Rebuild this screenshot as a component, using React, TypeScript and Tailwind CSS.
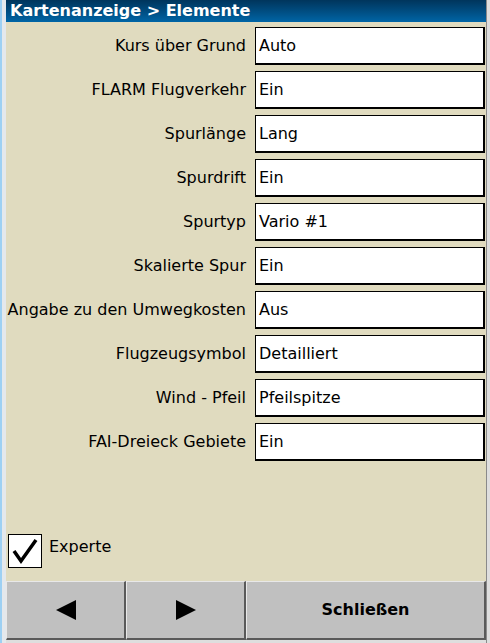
import React from "react";

const rows: [string, string][] = [
  ["Kurs über Grund", "Auto"],
  ["FLARM Flugverkehr", "Ein"],
  ["Spurlänge", "Lang"],
  ["Spurdrift", "Ein"],
  ["Spurtyp", "Vario #1"],
  ["Skalierte Spur", "Ein"],
  ["Angabe zu den Umwegkosten", "Aus"],
  ["Flugzeugsymbol", "Detailliert"],
  ["Wind - Pfeil", "Pfeilspitze"],
  ["FAI-Dreieck Gebiete", "Ein"],
];

const font = { fontFamily: '"DejaVu Sans", Verdana, sans-serif' };

function Btn({ className, children }: { className: string; children: React.ReactNode }) {
  return (
    <div
      className={`flex items-center justify-center bg-[#c0c0c0] border-t border-l border-t-[#e8e8e8] border-l-[#e8e8e8] border-r-2 border-b-2 border-r-[#5a5a5a] border-b-[#5a5a5a] ${className}`}
    >
      {children}
    </div>
  );
}

export default function App() {
  return (
    <div className="w-[490px] h-[643px] flex bg-[#dedede] overflow-hidden" style={font}>
      <div className="w-[2px] bg-[#9dd0f3]" />
      <div className="w-[4px] bg-[#e4e8ec]" />
      <div className="w-[480px] h-[640px] flex flex-col bg-[#e0dbbf]">
        <div className="h-[22px] shrink-0 bg-gradient-to-b from-[#00355c] to-[#0065a6] text-white font-bold text-[16px] leading-[22px] pl-[4px]">
          Kartenanzeige &gt; Elemente
        </div>
        <div className="flex flex-col gap-[6px] pt-[5px]">
          {rows.map(([label, value]) => (
            <div key={label} className="flex items-center h-[38px]">
              <div className="w-[241px] text-right text-[16px] text-black pr-[1px]">{label}</div>
              <div className="ml-[8px] w-[230px] h-[38px] bg-white border-t border-l border-r-2 border-b-2 border-black flex items-center pl-[3px] text-[16px] text-black">
                {value}
              </div>
            </div>
          ))}
        </div>
        <div className="flex-1" />
        <div className="flex items-start ml-[2px] mb-[13px]">
          <div className="w-[34px] h-[34px] bg-white border border-black flex items-center justify-center">
            <svg width="30" height="30" viewBox="0 0 30 30">
              <path d="M4 15 L11 25 L26 4" fill="none" stroke="black" strokeWidth="3.5" strokeLinejoin="miter" />
            </svg>
          </div>
          <div className="ml-[7px] mt-[1px] text-[16px] text-black">Experte</div>
        </div>
        <div className="h-[59px] shrink-0 flex">
          <Btn className="w-[120px]">
            <svg width="22" height="22" viewBox="0 0 22 22">
              <polygon points="1,11 21,1 21,21" fill="black" />
            </svg>
          </Btn>
          <Btn className="w-[120px]">
            <svg width="22" height="22" viewBox="0 0 22 22">
              <polygon points="1,1 21,11 1,21" fill="black" />
            </svg>
          </Btn>
          <Btn className="flex-1 font-bold text-[16px] text-black">Schließen</Btn>
        </div>
      </div>
      <div className="w-[1px] bg-[#8a8a8a]" />
    </div>
  );
}
